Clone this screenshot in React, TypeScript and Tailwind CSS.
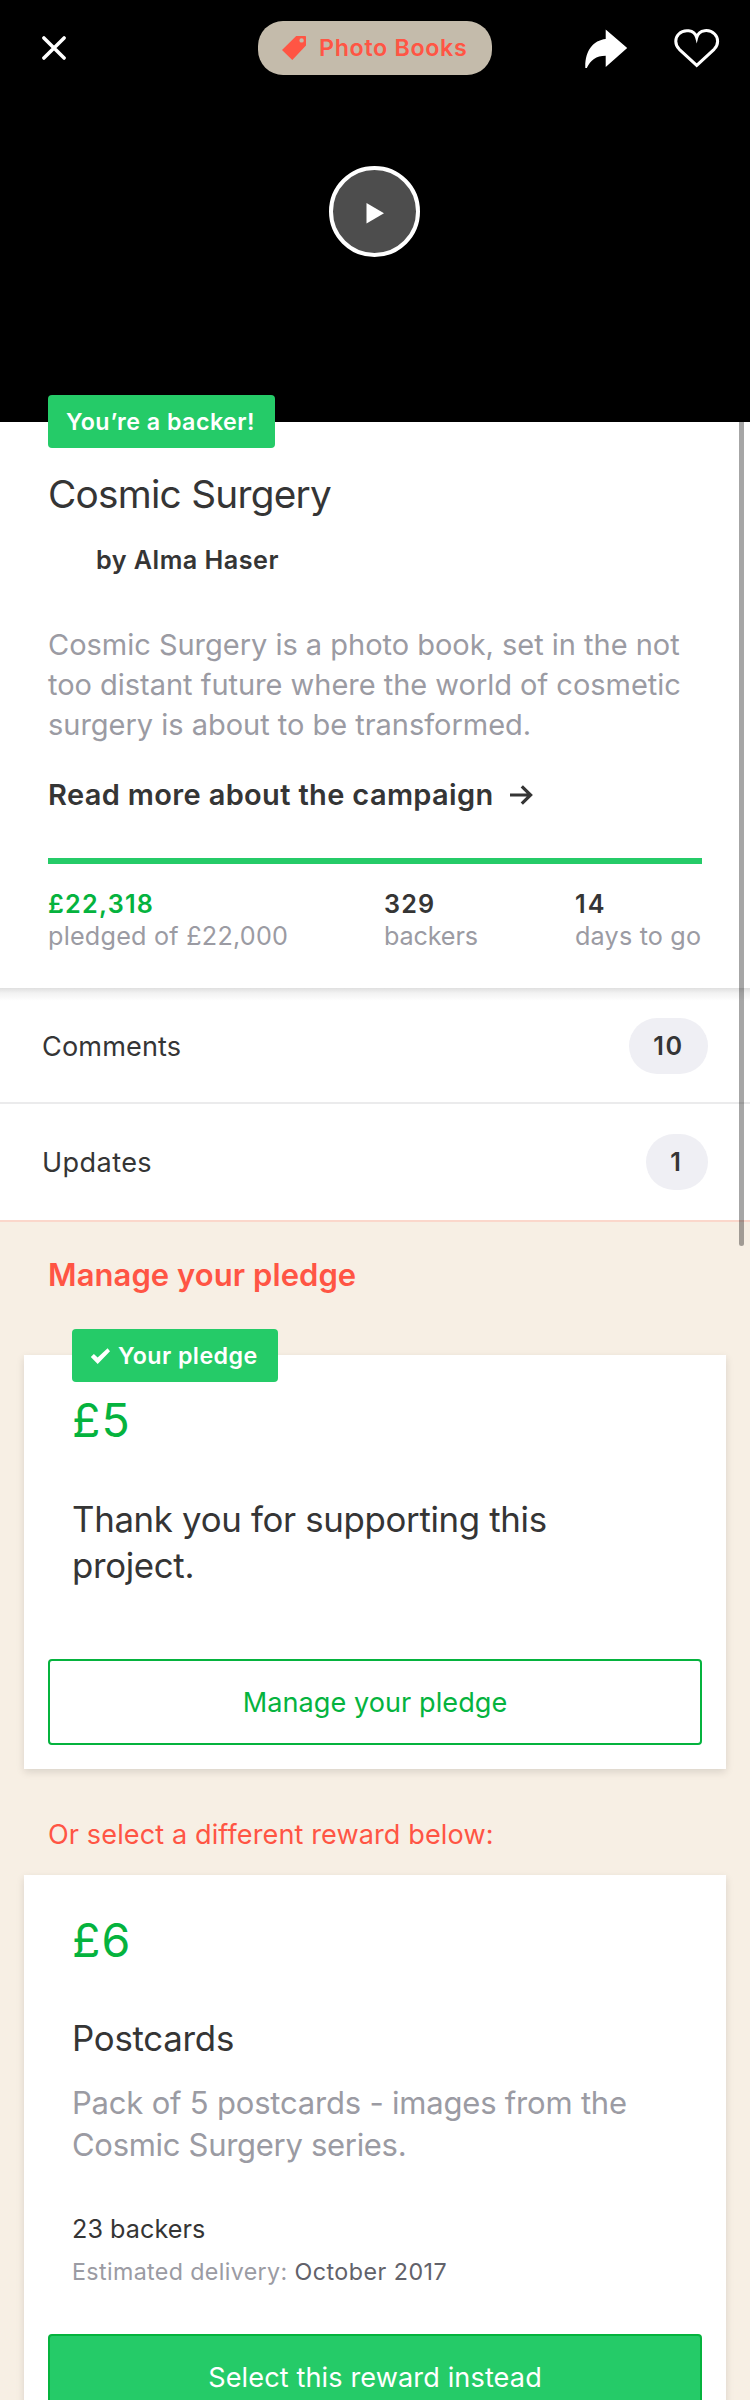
import type { ReactNode } from "react";

function CloseIcon() {
  return (
    <svg width="24" height="24" viewBox="0 0 24 24" fill="none" stroke="#fff" strokeWidth="3.5" strokeLinecap="round">
      <path d="M1.9 1.9 22.1 22.1M22.1 1.9 1.9 22.1" />
    </svg>
  );
}

function TagIcon() {
  return (
    <svg width="24" height="24" viewBox="0 0 24 24" fill="#ff5544">
      <path fillRule="evenodd" d="M14.2 0H23.2Q24 0 24 .8V9.4L10.3 24 0 14Z M19.6 2.2a2.2 2.2 0 1 0 0 4.4a2.2 2.2 0 1 0 0-4.4Z" />
    </svg>
  );
}

function ShareIcon() {
  return (
    <svg width="43" height="39" viewBox="0 0 43 39" fill="#fff">
      <path d="M20.7.6 42.2 19.1 20.7 38V26.7C11 26.8 5.6 31 1.8 39H.3C-.2 22 8 11.5 20.7 10.1Z" />
    </svg>
  );
}

function HeartIcon() {
  return (
    <svg width="46" height="39" viewBox="0 0 46 39" fill="none" stroke="#fff" strokeWidth="3">
      <path d="M22.7 36.4 5.3 20.3C.6 15.6.8 9 4.8 5 9.6.2 20.4.2 22.7 8.6 25-.2 35.8.2 40.6 5 44.6 9 44.8 15.6 40.1 20.3Z" />
    </svg>
  );
}

function CheckIcon() {
  return (
    <svg width="20" height="16" viewBox="0 0 20 16" fill="#fff" className="-mt-0.5">
      <path d="M.8 9 3.9 6 7.6 9.6 17.6.2 20 3.2 7.7 16Z" />
    </svg>
  );
}

function ArrowIcon() {
  return (
    <svg width="23" height="20" viewBox="0 0 23 20" fill="none" stroke="#353535" strokeWidth="3.2">
      <path d="M0 10H20.5M11.8 1.3 20.6 10 11.8 18.7" />
    </svg>
  );
}

function Stat({ value, label, className, valueClass }: { value: string; label: string; className: string; valueClass: string }) {
  return (
    <div className={className}>
      <div className={"font-semibold " + valueClass}>{value}</div>
      <div className="text-[#9b9ba3]">{label}</div>
    </div>
  );
}

function ListRow({ label, count, className, labelClass, pillClass }: { label: string; count: string; className: string; labelClass: string; pillClass: string }) {
  return (
    <div className={"flex items-center justify-between border-b-2 pr-[42px] pl-[42px] pt-[30px] " + className}>
      <span className={"pt-0.5 text-[27.1px] " + labelClass}>{label}</span>
      <span className={"flex h-14 items-center justify-center rounded-full bg-[#efeff4] pt-px text-[25.2px] font-semibold " + pillClass}>{count}</span>
    </div>
  );
}

function Card({ children, className }: { children: ReactNode; className: string }) {
  return <div className={"mx-6 bg-white px-6 shadow-[0_3px_8px_rgba(0,0,0,0.12)] " + className}>{children}</div>;
}

export default function App() {
  return (
    <div className="relative h-[2400px] w-[750px] overflow-hidden bg-white font-['Inter',sans-serif] whitespace-nowrap text-[#353535]">
      <header className="h-[422px] bg-black pt-[21px]">
        <div className="grid h-[54px] grid-cols-[216px_234px_1fr] items-center pl-[42px]">
          <CloseIcon />
          <div className="flex h-[54px] items-center rounded-[25px] bg-[#c4bbab] pl-6 text-[23.25px] font-semibold tracking-[0.67px] text-[#ff5544]">
            <TagIcon />
            <span className="ml-[13px] pt-px">Photo Books</span>
          </div>
          <div className="flex items-center gap-[46px] pl-[93px]">
            <ShareIcon />
            <HeartIcon />
          </div>
        </div>
        <div className="mt-[91px] ml-[329px] flex size-[91px] items-center justify-center rounded-full border-4 border-white bg-[#4d4d4d]">
          <svg width="18" height="21" viewBox="0 0 18 21" fill="#fff" className="ml-px mt-[3px]">
            <path d="M.5 0 18 10.3.5 20.6Z" />
          </svg>
        </div>
      </header>

      <section className="px-12 pb-9">
        <div className="relative -mt-[27px] flex h-[53px] w-[227px] items-center rounded-[4px] bg-[#25cb68] pt-0.5 pl-[18px] text-[23.25px] font-semibold tracking-[0.46px] text-white">
          You’re a backer!
        </div>
        <h1 className="mt-[22px] text-[38.75px] leading-[48px] tracking-[-0.74px]">Cosmic Surgery</h1>
        <div className="mt-[26px] pl-12 text-[25.2px] leading-8 font-semibold tracking-[0.47px]">by Alma Haser</div>
        <p className="mt-[49px] text-[29px] leading-10 tracking-[-0.02px] text-[#9b9ba3]">
          Cosmic Surgery is a photo book, set in the not
          <br />
          too distant future where the world of cosmetic
          <br />
          surgery is about to be transformed.
        </p>
        <div className="mt-[30px] flex h-10 items-center gap-4 text-[29px] font-semibold tracking-[0.35px]">
          Read more about the campaign
          <ArrowIcon />
        </div>
        <div className="mt-[43px] h-1.5 bg-[#25cb68]" />
        <div className="mt-6 flex text-[25.2px] leading-8">
          <Stat value="£22,318" label="pledged of £22,000" className="w-[336px] tracking-[0.22px]" valueClass="tracking-[1.25px] text-[#05b33e]" />
          <Stat value="329" label="backers" className="w-[191px] tracking-[-0.15px]" valueClass="tracking-[1.1px]" />
          <Stat value="14" label="days to go" className="tracking-[0.18px]" valueClass="tracking-[2px]" />
        </div>
      </section>

      <section className="bg-[linear-gradient(#dfdfdf,#f2f2f2_5px,#ffffff_13px)]">
        <ListRow label="Comments" count="10" className="border-[#ebebec] pb-7" labelClass="tracking-[0.12px]" pillClass="w-[79px] tracking-[1.5px]" />
        <ListRow label="Updates" count="1" className="border-[#fbd7cb] pb-[30px]" labelClass="tracking-[0.4px]" pillClass="w-[62px] pr-[3px]" />
      </section>

      <section className="h-[1200px] bg-[#f7efe4] pt-[33px]">
        <h2 className="pl-12 text-[31px] leading-10 font-semibold tracking-[0.06px] text-[#ff5544]">Manage your pledge</h2>
        <Card className="mt-[60px] h-[414px]">
          <div className="relative -top-[26px] -mb-[16px] ml-6 flex h-[53px] w-[206px] items-center rounded-[4px] bg-[#25cb68] pt-0.5 pl-[18px] text-[23.25px] font-semibold tracking-[0.43px] text-white">
            <CheckIcon />
            <span className="ml-2">Your pledge</span>
          </div>
          <div className="ml-6 text-[46.5px] leading-[56px] tracking-[1px] text-[#05b33e]">£5</div>
          <p className="mt-12 ml-6 text-[34.8px] leading-[46px] tracking-[-0.32px]">
            Thank you for supporting this
            <br />
            project.
          </p>
          <button className="mt-[71px] block h-[86px] w-full rounded-[4px] border-2 border-[#05b33e] pt-0.5 text-[27.1px] tracking-[0.05px] text-[#05b33e]">
            Manage your pledge
          </button>
        </Card>

        <div className="mt-[46px] pl-12 text-[27.1px] leading-10 tracking-[0.1px] text-[#ff5544]">Or select a different reward below:</div>
        <Card className="mt-5 h-[600px] pt-[37px]">
          <div className="pl-6">
            <div className="text-[46.5px] leading-[56px] tracking-[1px] text-[#05b33e]">£6</div>
            <h3 className="mt-[47px] text-[34.8px] leading-[46px] tracking-[-0.25px]">Postcards</h3>
            <p className="mt-[21px] text-[31px] leading-[42px] tracking-[-0.2px] text-[#9b9ba3]">
              Pack of 5 postcards - images from the
              <br />
              <span className="tracking-[-0.3px]">Cosmic Surgery series.</span>
            </p>
            <div className="mt-[47px] text-[25.2px] leading-8 tracking-[0.04px]">23 backers</div>
            <div className="mt-[11px] text-[23.25px] leading-8 tracking-[0.36px] text-[#9b9ba3]">
              Estimated delivery: <span className="tracking-[0.48px] text-[#62626a]">October 2017</span>
            </div>
          </div>
          <button className="mt-[46px] block h-[86px] w-full rounded-[4px] border-2 border-[#05b33e] bg-[#25cb68] pt-0.5 text-[27.1px] tracking-[0.12px] text-white">
            Select this reward instead
          </button>
        </Card>
      </section>

      <div className="absolute top-[422px] left-[739px] h-[824px] w-[5px] rounded-b-full bg-black/35" />
    </div>
  );
}
